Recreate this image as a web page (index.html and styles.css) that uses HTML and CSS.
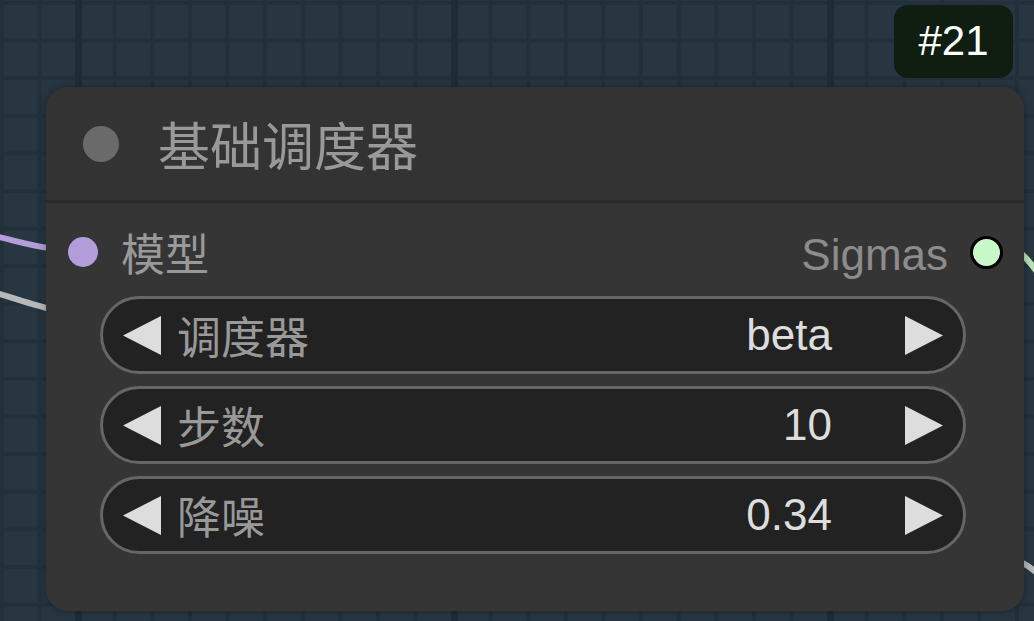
FILE: index.html
```html
<!DOCTYPE html>
<html>
<head>
<meta charset="utf-8">
<link rel="stylesheet" href="styles.css">
</head>
<body>
<div class="canvas">
  <svg class="links" width="1034" height="621" viewBox="0 0 1034 621">
    <path d="M-10 235 C 10 239, 30 246, 50 248" stroke="#b39ddb" stroke-width="6" fill="none"/>
    <path d="M-10 291 C 10 297, 30 304, 50 309" stroke="#b8b8b8" stroke-width="6" fill="none"/>
    <path d="M1015 250 C 1022 252, 1030 262, 1040 276" stroke="#b6e3b6" stroke-width="6" fill="none"/>
    <path d="M1015 560 C 1022 562, 1030 566, 1040 576" stroke="#b8b8b8" stroke-width="6" fill="none"/>
  </svg>

  <div class="badge">#21</div>

  <div class="node">
    <div class="node-title">
      <span class="title-dot"></span>
      <span class="title-text">基础调度器</span>
    </div>
    <div class="node-body">
      <div class="slots">
        <div class="slot slot-in">
          <span class="slot-dot in-dot"></span>
          <span class="slot-label">模型</span>
        </div>
        <div class="slot slot-out">
          <span class="slot-label out-label">Sigmas</span>
          <span class="slot-dot out-dot"></span>
        </div>
      </div>
      <div class="widgets">
        <div class="widget">
          <svg class="arrow" width="38" height="39" viewBox="0 0 38 39"><polygon points="38,0 38,39 0,19.5" fill="#dddddd"/></svg>
          <span class="w-label">调度器</span>
          <span class="w-value">beta</span>
          <svg class="arrow" width="38" height="39" viewBox="0 0 38 39"><polygon points="0,0 0,39 38,19.5" fill="#dddddd"/></svg>
        </div>
        <div class="widget">
          <svg class="arrow" width="38" height="39" viewBox="0 0 38 39"><polygon points="38,0 38,39 0,19.5" fill="#dddddd"/></svg>
          <span class="w-label">步数</span>
          <span class="w-value">10</span>
          <svg class="arrow" width="38" height="39" viewBox="0 0 38 39"><polygon points="0,0 0,39 38,19.5" fill="#dddddd"/></svg>
        </div>
        <div class="widget">
          <svg class="arrow" width="38" height="39" viewBox="0 0 38 39"><polygon points="38,0 38,39 0,19.5" fill="#dddddd"/></svg>
          <span class="w-label">降噪</span>
          <span class="w-value">0.34</span>
          <svg class="arrow" width="38" height="39" viewBox="0 0 38 39"><polygon points="0,0 0,39 38,19.5" fill="#dddddd"/></svg>
        </div>
      </div>
    </div>
  </div>
</div>
</body>
</html>
```

FILE: styles.css
```css
html, body {
  margin: 0;
  padding: 0;
}

body {
  width: 1034px;
  height: 621px;
  overflow: hidden;
  font-family: "Liberation Sans", "Noto Sans CJK SC", Arial, sans-serif;
}

.canvas {
  position: relative;
  width: 1034px;
  height: 621px;
  background-color: #283641;
  background-image:
    linear-gradient(to right, #1f2c36 0, #1f2c36 7px, transparent 7px),
    linear-gradient(to right, #22303b 0, #22303b 4px, transparent 4px),
    linear-gradient(to bottom, #22303b 0, #22303b 4px, transparent 4px);
  background-size: 376px 100%, 37.6px 100%, 100% 37.6px;
  background-position: 75px 0, 0 0, 0 1px;
  overflow: hidden;
}

.links {
  position: absolute;
  left: 0;
  top: 0;
}

.badge {
  position: absolute;
  left: 894px;
  top: 5px;
  width: 119px;
  height: 73px;
  box-sizing: border-box;
  background: #0f1e11;
  border-radius: 14px;
  color: #ffffff;
  font-size: 42px;
  display: flex;
  align-items: center;
  justify-content: center;
  padding-bottom: 2px;
}

.node {
  position: absolute;
  left: 46px;
  top: 87px;
  width: 978px;
  height: 524px;
  background: #353535;
  border-radius: 22px;
  box-shadow: 0 0 8px rgba(0, 0, 0, 0.35);
  display: flex;
  flex-direction: column;
  overflow: hidden;
}

.node-title {
  height: 113px;
  background: #333333;
  border-bottom: 3px solid #2a2a2a;
  display: flex;
  align-items: center;
  padding-left: 37px;
  flex-shrink: 0;
}

.title-dot {
  width: 36px;
  height: 36px;
  border-radius: 50%;
  background: #6a6a6a;
  flex-shrink: 0;
}

.title-text {
  margin-left: 39px;
  font-size: 52px;
  color: #999999;
  line-height: 1;
  font-family: "Noto Sans CJK SC", "Liberation Sans", sans-serif;
}

.node-body {
  padding: 24px 0 0 0;
  display: flex;
  flex-direction: column;
}

.slots {
  height: 50px;
  display: flex;
  justify-content: space-between;
  align-items: center;
  padding: 0 21px 0 22px;
}

.slot {
  display: flex;
  align-items: center;
}

.slot-dot {
  width: 30px;
  height: 30px;
  border-radius: 50%;
  box-sizing: border-box;
}

.in-dot {
  background: #b39ddb;
}

.out-dot {
  width: 33px;
  height: 33px;
  background: #c8f9c8;
  border: 3px solid #000000;
}

.slot-label {
  font-size: 44px;
  color: #999999;
  line-height: 1;
}

.slot-in .slot-label {
  margin-left: 23px;
  font-family: "Noto Sans CJK SC", "Liberation Sans", sans-serif;
}

.out-label {
  margin-right: 22px;
  margin-top: 6px;
  color: #8c8c8c;
}

.widgets {
  margin-top: 19px;
  display: flex;
  flex-direction: column;
  gap: 12px;
  padding: 0 58px 0 54px;
}

.widget {
  height: 78px;
  box-sizing: border-box;
  border: 3px solid #666666;
  border-radius: 39px;
  background: #222222;
  display: flex;
  align-items: center;
  padding: 0 20px;
}

.arrow {
  flex-shrink: 0;
  display: block;
}

.w-label {
  margin-left: 16px;
  font-size: 44px;
  color: #999999;
  line-height: 1;
  font-family: "Noto Sans CJK SC", "Liberation Sans", sans-serif;
  flex: 1;
}

.w-value {
  font-size: 44px;
  color: #dddddd;
  line-height: 1;
  margin-right: 73px;
}
```
